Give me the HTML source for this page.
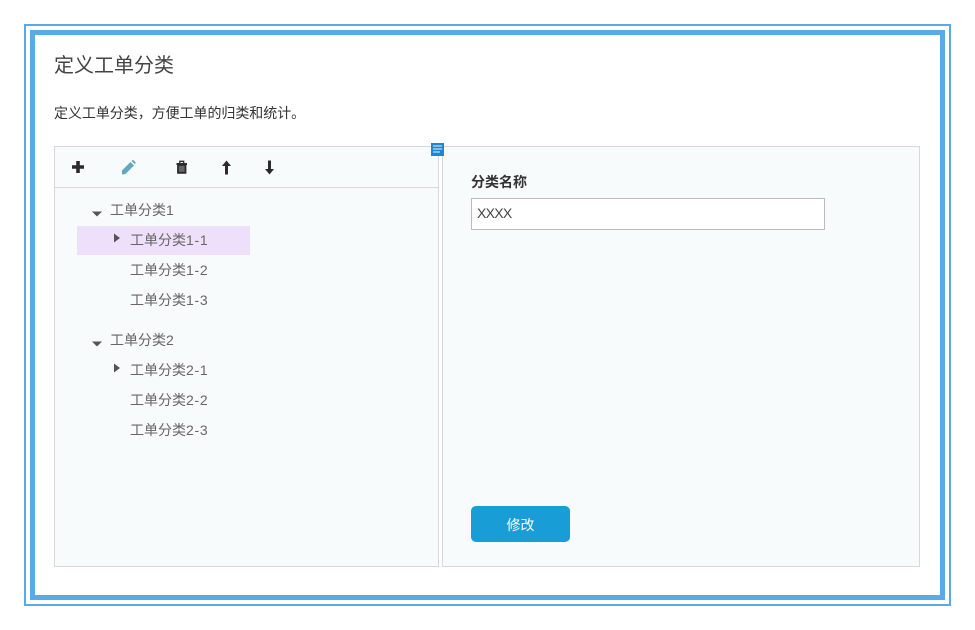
<!DOCTYPE html>
<html lang="zh">
<head>
<meta charset="utf-8">
<style>
html,body{margin:0;padding:0;width:975px;height:630px;overflow:hidden;background:#fff;font-family:"Liberation Sans","Noto Sans CJK SC",sans-serif;}
.a{position:absolute;box-sizing:border-box;}
.t{position:absolute;white-space:nowrap;line-height:20px;font-size:14px;color:#666;}
.t span{letter-spacing:.7px;}
svg{position:absolute;overflow:visible;}
</style>
</head>
<body>
<div class="a" style="left:24px;top:24px;width:927px;height:582px;border:2px solid #5aaae8;"></div>
<div class="a" style="left:30px;top:30px;width:915px;height:570px;border:5px solid #5aaae8;"></div>

<div class="t" style="left:54px;top:54px;font-size:20px;line-height:24px;color:#444;">定义工单分类</div>
<div class="t" style="left:54px;top:103px;font-size:14px;letter-spacing:-.05px;color:#333;">定义工单分类，方便工单的归类和统计。</div>

<div class="a" style="left:54px;top:146px;width:385px;height:421px;background:#f7fbfb;border:1px solid #d8d8d8;"></div>
<div class="a" style="left:55px;top:187px;width:383px;height:1px;background:#d8d8d8;"></div>
<div class="a" style="left:442px;top:146px;width:478px;height:421px;background:#f7fbfb;border:1px solid #d8d8d8;"></div>
<div class="a" style="left:77px;top:226px;width:173px;height:29px;background:#eee0fb;"></div>

<svg style="left:0;top:0" width="975" height="630">
  <!-- plus -->
  <path d="M78 161V173M72 167H84" stroke="#2b2b2b" stroke-width="3.600" fill="none"/>
  <!-- pencil -->
  <path d="M122 170.500L130.500 162L134 165.500L125.500 174L122 174.500Z" fill="#62a9bb"/>
  <path d="M131.500 161L133 159.800L135.800 162.600L134.800 164.300Z" fill="#62a9bb"/>
  <!-- trash -->
  <path d="M176.500 163H187V165H176.500Z" fill="#2b2b2b"/>
  <path d="M179.800 163.500V161.300H183.700V163.500" stroke="#2b2b2b" stroke-width="1.300" fill="none"/>
  <path d="M178 165H185.500V172.800H178Z" fill="#666" stroke="#2b2b2b" stroke-width="1.800"/>
  <!-- up -->
  <path d="M226.500 164V174.500" stroke="#2b2b2b" stroke-width="3"/>
  <path d="M226.500 160.500L231 166H222Z" fill="#2b2b2b"/>
  <!-- down -->
  <path d="M269.500 160.500V170.500" stroke="#2b2b2b" stroke-width="3"/>
  <path d="M269.500 174.500L274 169H265Z" fill="#2b2b2b"/>
  <!-- tree arrows -->
  <path d="M92 211.500H102L97 216.500Z" fill="#555"/>
  <path d="M114 233.500L120 238L114 242.500Z" fill="#555"/>
  <path d="M92 341.500H102L97 346.500Z" fill="#555"/>
  <path d="M114 363.500L120 368L114 372.500Z" fill="#555"/>
  <!-- drag handle -->
  <rect x="431" y="143" width="13" height="13" fill="#1f86cf"/>
  <path d="M433 146H442M433 149H442M433 152H440" stroke="#e3f1fb" stroke-width="1.100"/>
</svg>

<div class="t" style="left:110px;top:200px;">工单分类1</div>
<div class="t" style="left:130px;top:230px;">工单分类<span>1-1</span></div>
<div class="t" style="left:130px;top:260px;">工单分类<span>1-2</span></div>
<div class="t" style="left:130px;top:290px;">工单分类<span>1-3</span></div>
<div class="t" style="left:110px;top:330px;">工单分类2</div>
<div class="t" style="left:130px;top:360px;">工单分类<span>2-1</span></div>
<div class="t" style="left:130px;top:390px;">工单分类<span>2-2</span></div>
<div class="t" style="left:130px;top:420px;">工单分类<span>2-3</span></div>

<div class="t" style="left:471px;top:172px;font-size:14px;font-weight:bold;color:#333;">分类名称</div>
<div class="a" style="left:471px;top:198px;width:354px;height:32px;background:#fff;border:1px solid #bbb;"></div>
<div class="t" style="left:477px;top:203px;font-size:14px;letter-spacing:-.7px;color:#444;">XXXX</div>

<div class="a" style="left:471px;top:506px;width:99px;height:36px;background:#199dd6;border-radius:5px;"></div>
<div class="t" style="left:471px;top:515px;width:99px;text-align:center;color:#fff;font-size:14px;">修改</div>
</body>
</html>
